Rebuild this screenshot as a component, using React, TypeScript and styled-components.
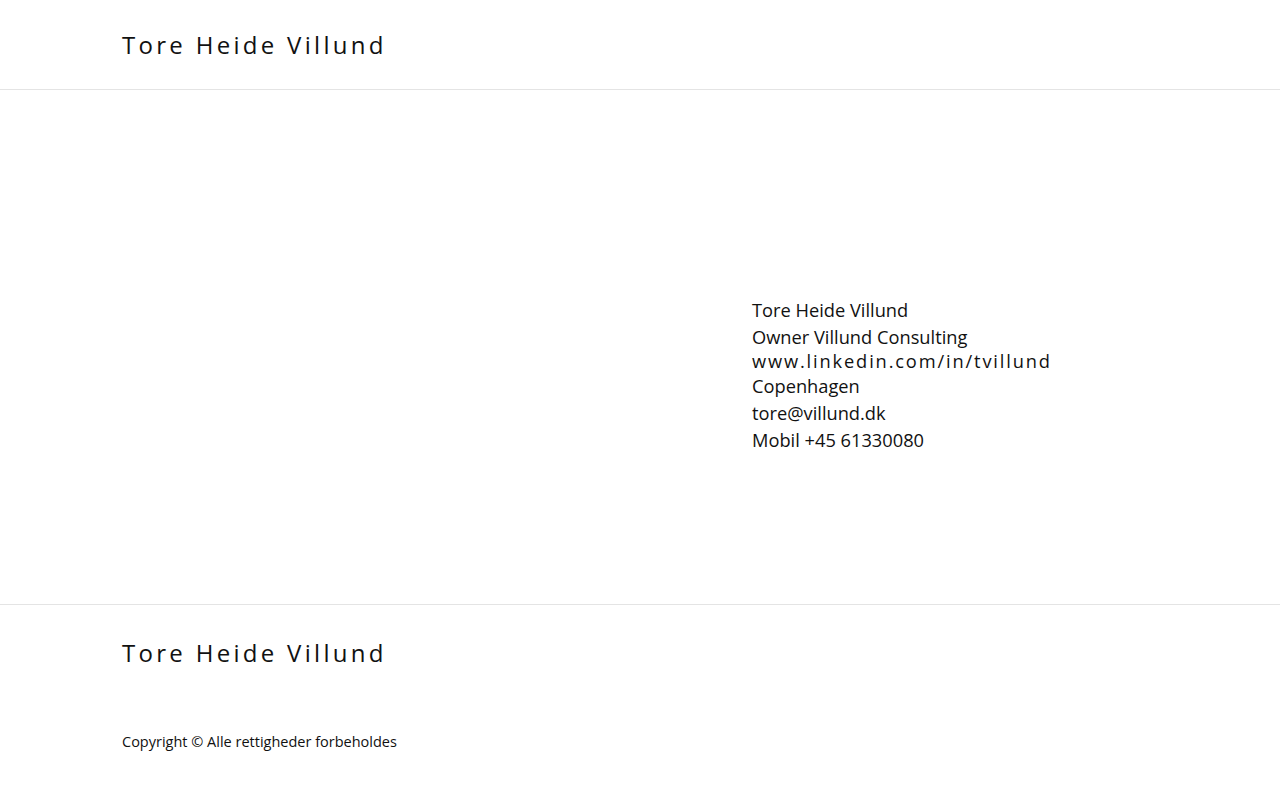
import React from "react";
import styled, { createGlobalStyle } from "styled-components";

const Global = createGlobalStyle`
  html, body { margin: 0; padding: 0; background: #fff; }
  body { font-family: "Open Sans", sans-serif; color: #000; }
  * { box-sizing: border-box; }
`;

const Page = styled.div`
  width: 1280px;
  min-height: 800px;
  display: flex;
  flex-direction: column;
`;

const Header = styled.header`
  height: 90px;
  border-bottom: 1px solid #e4e4e4;
  display: flex;
  align-items: center;
  padding: 0 122px;
`;

const Brand = styled.div`
  font-family: "Open Sans", sans-serif;
  font-size: 24px;
  font-weight: 400;
  letter-spacing: 3.3px;
  color: #111;
  line-height: 1;
`;

const Main = styled.main`
  height: 514px;
  display: grid;
  grid-template-columns: 630px 1fr;
  padding: 0 122px;
`;

const Contact = styled.div`
  grid-column: 2;
  padding-top: 206px;
  display: flex;
  flex-direction: column;
`;

const Line = styled.div<{ $h: number; $spaced?: boolean }>`
  font-size: 18.25px;
  height: ${(p) => p.$h}px;
  line-height: ${(p) => p.$h}px;
  color: #111;
  white-space: nowrap;
  letter-spacing: ${(p) => (p.$spaced ? "1.85px" : "0")};
`;

const Footer = styled.footer`
  border-top: 1px solid #e4e4e4;
  padding: 36px 122px 0;
  display: flex;
  flex-direction: column;
`;

const Copyright = styled.div`
  margin-top: 67px;
  font-size: 14.5px;
  color: #111;
  line-height: 20px;
`;

export default function App() {
  return (
    <Page>
      <Global />
      <Header>
        <Brand>Tore Heide Villund</Brand>
      </Header>
      <Main>
        <Contact>
          <Line $h={28}>Tore Heide Villund</Line>
          <Line $h={26}>Owner Villund Consulting</Line>
          <Line $h={22} $spaced>www.linkedin.com/in/tvillund</Line>
          <Line $h={28}>Copenhagen</Line>
          <Line $h={26}>tore@villund.dk</Line>
          <Line $h={28}>Mobil +45 61330080</Line>
        </Contact>
      </Main>
      <Footer>
        <Brand>Tore Heide Villund</Brand>
        <Copyright>Copyright © Alle rettigheder forbeholdes</Copyright>
      </Footer>
    </Page>
  );
}
